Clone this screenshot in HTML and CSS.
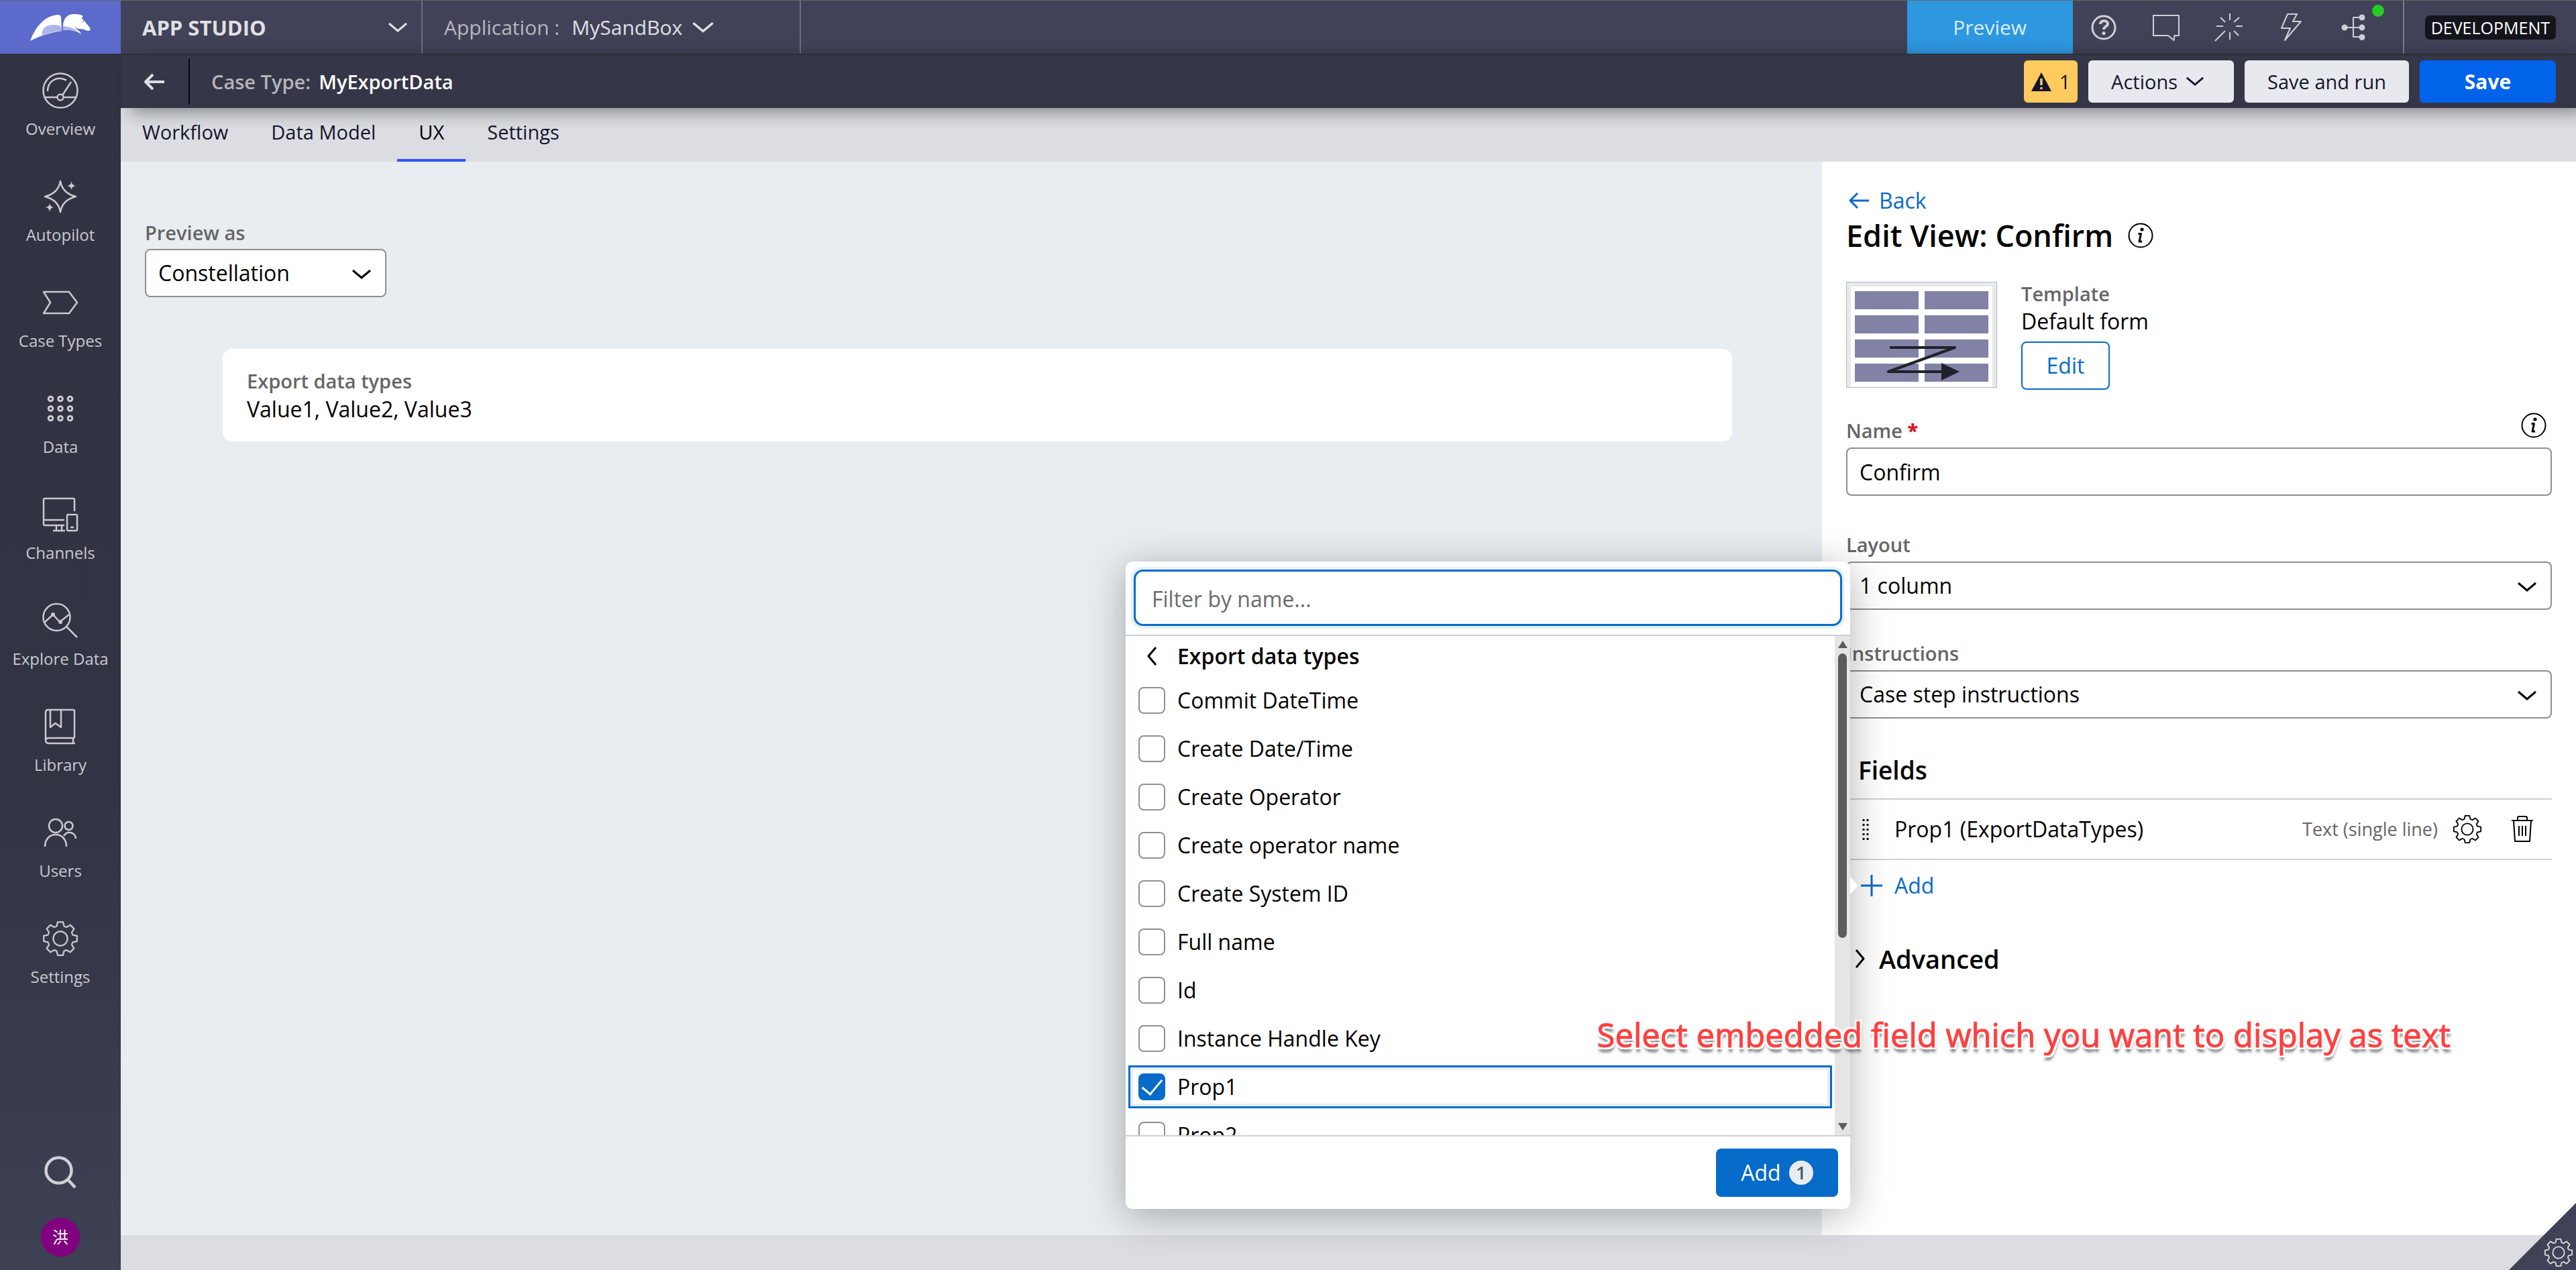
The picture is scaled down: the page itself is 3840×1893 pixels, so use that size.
FILE: index.html
```html
<!DOCTYPE html>
<html lang="en">
<head>
<meta charset="utf-8">
<title>App Studio - MyExportData</title>
<link rel="stylesheet" href="styles.css">
</head>
<body>
<svg class="sprite" aria-hidden="true">
  <symbol id="gear" viewBox="-12 -12 24 24"><path d="M-1.8-11H1.8L2.4-8.3Q3.3-7.6 4.17-7.57L6.51-9.05 9.05-6.51 7.57-4.17Q7.6-3.3 8.3-2.4L11-1.8V1.8L8.3 2.4Q7.6 3.3 7.57 4.17L9.05 6.51 6.51 9.05 4.17 7.57Q3.3 7.6 2.4 8.3L1.8 11H-1.8L-2.4 8.3Q-3.3 7.6-4.17 7.57L-6.51 9.05-9.05 6.51-7.57 4.17Q-7.6 3.3-8.3 2.4L-11 1.8V-1.8L-8.3-2.4Q-7.6-3.3-7.57-4.17L-9.05-6.51-6.51-9.05-4.17-7.57Q-3.3-7.6-2.4-8.3Z"/><circle r="4.7"/></symbol>
  <symbol id="chevron" viewBox="0 0 30 16"><path d="M2 2L15 13L28 2"/></symbol>
  <symbol id="info" viewBox="0 0 38 38"><circle cx="19" cy="19" r="17.5"/><circle cx="21" cy="10" r="2.6" class="solid"/><path d="M15.500 16.500H19.500L17 28H21" class="bold"/></symbol>
  <symbol id="arrow-left" viewBox="0 0 32 26"><path d="M14 2L3 13L14 24M3 13H31"/></symbol>
</svg>

<div class="app">
  <header class="topbar">
    <a class="logo" href="#" aria-label="Home">
      <svg viewBox="45 24 90 40" width="90" height="40">
        <path fill="#fff" d="M45 64C52 45 66 25 88 25Q91 26 91 30L92 49C78 51 60 56 45 64Z"/>
        <path fill="#aeb4e6" d="M63 56C61 43 72 40 80 40C86 40 90 41 91 43L92.500 49C80 50 70 53 63 56Z"/>
        <path fill="#fff" d="M94 48C93 30 100 24 111 24C118 24 121 25 123.500 27L122 31C127 34 128 38 134 44Q136 49 131 49C128 49 127 46 118 46Q113 45 111 42C113 47 120 49 121 54C115 49 105 47 94 48Z"/>
        <path fill="#aeb4e6" d="M94 48V42C102 42.500 111 45 117 50C110 48 102 47.500 94 48Z"/>
        <circle cx="124" cy="35" r="1" fill="#5c6acb"/>
      </svg>
    </a>
    <button class="studio">APP STUDIO<svg class="chev" width="30" height="16"><use href="#chevron"/></svg></button>
    <button class="application"><span>Application :</span>MySandBox<svg class="chev" width="34" height="18"><use href="#chevron"/></svg></button>
    <button class="preview">Preview</button>
    <div class="tools">
      <button aria-label="Help"><svg viewBox="0 0 44 44" class="ic"><circle cx="22" cy="22" r="17" stroke-width="3"/><path stroke-width="4" d="M17 17C17 10 28 11 28 16.500C28 20.500 22 20.500 22 25"/><circle class="solid" cx="22" cy="30.500" r="2.600"/></svg></button>
      <button aria-label="Messages"><svg viewBox="0 0 44 44" class="ic"><path d="M3 4H41V34H34.500L33.500 41L25 34H3Z"/></svg></button>
      <button aria-label="Highlights"><svg viewBox="0 0 44 44" class="ic"><path d="M24 1V11M24 29V40M4 20H14M33 20H43M10 7L17 14M38 7L30 14M30 27L37 34M17 27L2 42"/></svg></button>
      <button aria-label="Quick actions"><svg viewBox="0 0 44 44" class="ic"><path d="M17 2H31L25 13H37L13 41L21 23H8Z"/></svg></button>
      <button aria-label="Agile workbench" class="tree"><svg viewBox="0 0 44 44" class="ic"><path d="M9 22H35M35 7H22V36H35"/><g class="solid"><circle cx="9" cy="22" r="4.500"/><circle cx="35" cy="7" r="4.500"/><circle cx="35" cy="22" r="4.500"/><circle cx="35" cy="36.500" r="4.500"/></g></svg><i class="dot"></i></button>
    </div>
    <div class="env"><span>DEVELOPMENT</span></div>
  </header>

  <nav class="sidebar" aria-label="Studio">
    <a href="#"><svg viewBox="0 0 54 54"><circle cx="27" cy="27" r="25.500"/><path d="M8 28C8 14 20 4 36 11.500M43 14L30 34M3.500 37H22M32 37H50.500"/><circle cx="27" cy="37" r="4.500"/></svg>Overview</a>
    <a href="#"><svg viewBox="0 0 54 54"><path d="M27 4Q30 22 50 27Q30 32 27 50Q24 32 4 27Q24 22 27 4Z"/><path class="solid" d="M43.500 4Q44 10 50 11Q44 12 43.500 17Q43 12 37 11Q43 10 43.500 4ZM11 37Q11.500 42 17 43Q11.500 44 11 50Q10.500 44 5 43Q10.500 42 11 37Z"/></svg>Autopilot</a>
    <a href="#"><svg viewBox="0 0 54 54"><path d="M2 11H40L52 27L40 43H2L12 27Z"/></svg>Case Types</a>
    <a href="#"><svg viewBox="0 0 54 54"><g stroke-width="3"><circle cx="12.500" cy="12.500" r="3.300"/><circle cx="27" cy="12.500" r="3.300"/><circle cx="41.500" cy="12.500" r="3.300"/><circle cx="12.500" cy="27" r="3.300"/><circle cx="27" cy="27" r="3.300"/><circle cx="41.500" cy="27" r="3.300"/><circle cx="12.500" cy="41.500" r="3.300"/><circle cx="27" cy="41.500" r="3.300"/><circle cx="41.500" cy="41.500" r="3.300"/></g></svg>Data</a>
    <a href="#"><svg viewBox="0 0 54 54"><path d="M48 22V5Q48 3 46 3H4Q2 3 2 5V41Q2 43 4 43H33M2 35H33M16 51H34M21 43V51M29 43V51"/><rect x="37" y="27" width="15" height="24" rx="2"/><path d="M42 46H47"/></svg>Channels</a>
    <a href="#"><svg viewBox="0 0 54 54"><circle cx="21.500" cy="22" r="20"/><path d="M36 36L52 52M3 30L16 18L26 29L40 18"/><g class="solid"><circle cx="16" cy="18" r="3"/><circle cx="27" cy="29" r="3"/></g></svg>Explore Data</a>
    <a href="#"><svg viewBox="0 0 54 54"><path d="M48 44V4Q48 2 46 2H9Q5 2 5 6V47Q5 52 10 52H49M48 44H10Q5 44 5 48M46 44V52M12 2V28L19.500 22L28 28V2"/></svg>Library</a>
    <a href="#"><svg viewBox="0 0 54 54"><circle cx="20" cy="17" r="10"/><path d="M4 48C4 24 36 24 36 48M32 32C38 22 50 28 50 36"/><circle cx="39.500" cy="17" r="6"/></svg>Users</a>
    <a href="#"><svg class="gear"><use href="#gear"/></svg>Settings</a>
    <div class="foot">
      <button aria-label="Search"><svg viewBox="0 0 54 54"><circle cx="24.500" cy="23.500" r="19" stroke-width="4.500"/><path stroke-width="4.500" d="M38 37L49 49"/></svg></button>
      <button class="avatar">洪</button>
    </div>
  </nav>

  <main class="work">
    <div class="casebar">
      <button class="back" aria-label="Back"><svg width="32" height="26"><use href="#arrow-left"/></svg></button>
      <h1><span>Case Type:</span>MyExportData</h1>
      <div class="actions">
        <button class="warn"><svg viewBox="0 0 30 28" width="30" height="28"><path d="M15 0L30 28H0Z" fill="#14152c"/><path d="M15 9V19M15 22V25" stroke="#ffcb5e" stroke-width="3.500" fill="none"/></svg>1</button>
        <button class="more">Actions<svg class="chev" width="28" height="15"><use href="#chevron"/></svg></button>
        <button>Save and run</button>
        <button class="save">Save</button>
      </div>
    </div>
    <nav class="tabs" aria-label="Case type">
      <a href="#">Workflow</a><a href="#">Data Model</a><a href="#" class="on" aria-current="page">UX</a><a href="#">Settings</a>
    </nav>

    <div class="body">
      <section class="canvas">
        <div class="previewas">
          <label for="mode">Preview as</label>
          <div class="select"><select id="mode"><option>Constellation</option></select><svg class="chev" width="30" height="16"><use href="#chevron"/></svg></div>
        </div>
        <div class="card">
          <div class="lbl">Export data types</div>
          <div>Value1, Value2, Value3</div>
        </div>
      </section>

      <aside class="panel">
        <a class="backlink" href="#"><svg width="32" height="26"><use href="#arrow-left"/></svg>Back</a>
        <h2>Edit View: Confirm<svg class="info" width="38" height="38"><use href="#info"/></svg></h2>
        <div class="template">
          <svg class="thumb" viewBox="0 0 225 158" width="225" height="158">
            <rect width="225" height="158" fill="#b4b5cb"/>
            <rect x="1" y="1" width="223" height="156" fill="#e8e9eb"/>
            <rect x="7" y="7" width="211" height="150" fill="#fff"/>
            <g fill="#8182a5"><rect x="13" y="14" width="95" height="27"/><rect x="117" y="14" width="95" height="27"/><rect x="13" y="50" width="95" height="27"/><rect x="117" y="50" width="95" height="27"/><rect x="13" y="86" width="95" height="27"/><rect x="117" y="86" width="95" height="27"/><rect x="13" y="122" width="95" height="27"/><rect x="117" y="122" width="95" height="27"/></g>
            <path d="M65 98H162L63 134H145" fill="none" stroke="#20212a" stroke-width="4"/><path d="M142 121L169 134L142 147Z" fill="#20212a"/>
          </svg>
          <div>
            <div class="lbl">Template</div>
            <div class="value">Default form</div>
            <button class="edit">Edit</button>
          </div>
        </div>
        <div class="field wide">
          <div class="head"><label for="vname">Name <b>*</b></label><svg class="info" width="38" height="38"><use href="#info"/></svg></div>
          <input id="vname" type="text" value="Confirm">
        </div>
        <div class="field">
          <div class="head"><label for="layout">Layout</label></div>
          <div class="select"><select id="layout"><option>1 column</option></select><svg class="chev" width="30" height="16"><use href="#chevron"/></svg></div>
        </div>
        <div class="field">
          <div class="head"><label for="instr">Instructions</label></div>
          <div class="select"><select id="instr"><option>Case step instructions</option></select><svg class="chev" width="30" height="16"><use href="#chevron"/></svg></div>
        </div>
        <h3>Fields</h3>
        <div class="prop">
          <svg class="grip" viewBox="0 0 10 32" width="10" height="32"><path d="M2 1V32M8 1V32"/></svg>
          <span class="pname">Prop1 (ExportDataTypes)</span>
          <span class="ptype">Text (single line)</span>
          <button aria-label="Configure"><svg width="44" height="44"><use href="#gear"/></svg></button>
          <button aria-label="Delete"><svg viewBox="0 0 44 44" width="44" height="44"><path d="M6 9H38M15 9V5Q15 3 17 3H27Q29 3 29 5V9M9 9L11 40H33L35 9M17 17V32M22 17V32M27 17V32"/></svg></button>
        </div>
        <button class="addfield"><svg viewBox="0 0 32 32" width="32" height="32"><path d="M16 0V32M0 16H32"/></svg>Add</button>
        <button class="advanced"><svg viewBox="0 0 16 30" width="16" height="30"><path d="M2 2L13 15L2 28"/></svg>Advanced</button>
      </aside>
    </div>
    <footer class="bottombar"></footer>

    <div class="picker" role="dialog" aria-label="Add fields">
      <div class="search"><input type="text" aria-label="Filter by name" placeholder="Filter by name..."></div>
      <div class="scroller">
        <div class="list">
          <button class="crumb"><svg viewBox="0 0 16 30" width="16" height="30"><path d="M14 2L3 15L14 28"/></svg>Export data types</button>
          <label><input type="checkbox">Commit DateTime</label>
          <label><input type="checkbox">Create Date/Time</label>
          <label><input type="checkbox">Create Operator</label>
          <label><input type="checkbox">Create operator name</label>
          <label><input type="checkbox">Create System ID</label>
          <label><input type="checkbox">Full name</label>
          <label><input type="checkbox">Id</label>
          <label><input type="checkbox">Instance Handle Key</label>
          <label class="active"><input type="checkbox" checked>Prop1</label>
          <label><input type="checkbox">Prop2</label>
        </div>
        <div class="track"><i class="up"></i><i class="thumbbar"></i><i class="down"></i></div>
      </div>
      <div class="commit"><button>Add<span>1</span></button></div>
      <i class="pointer"></i>
    </div>
    <p class="note">Select embedded field which you want to display as text</p>
    <button class="corner" aria-label="Developer tools"><svg width="44" height="44"><use href="#gear"/></svg></button>
  </main>
</div>
</body>
</html>
```
FILE: styles.css
```css
* { box-sizing: border-box; }
body {
  margin: 0;
  font: 32px/44px "Open Sans", "Noto Sans CJK SC", sans-serif;
  color: #000;
  background: #dcdde2;
}
button, input, select { font: inherit; color: inherit; margin: 0; }
button { border: 0; padding: 0; background: none; text-align: left; }
a { color: inherit; text-decoration: none; }
h1, h2, h3, p { margin: 0; }
i { display: block; }
svg { display: block; flex: none; fill: none; stroke: currentColor; stroke-width: 2; stroke-linejoin: round; }
.sprite { position: absolute; width: 0; height: 0; }
.solid { fill: currentColor; stroke: none; }
.bold { stroke-width: 3; }
.chev { stroke-width: 3; stroke-linejoin: miter; }

.app {
  display: grid;
  grid-template: 80px 1fr / 180px 1fr;
  min-height: 100vh;
}

/* top bar */
.topbar {
  grid-column: 1 / -1;
  display: flex;
  background: #414257;
  border-top: 1px solid #666766;
  color: #e0e0e4;
}
.logo { width: 180px; background: #5c6acb; display: grid; place-items: center; }
.logo svg { stroke: none; }
.studio {
  width: 450px;
  display: flex;
  align-items: center;
  justify-content: space-between;
  padding: 0 20px 0 32px;
  font-size: 31px;
  font-weight: 700;
  border-right: 2px solid #6d6e80;
}
.application {
  width: 564px;
  display: flex;
  align-items: center;
  gap: 14px;
  padding-left: 32px;
  font-size: 30px;
  border-right: 2px solid #6d6e80;
}
.application span { color: #b7b8c0; margin-right: 4px; }
.preview {
  width: 247px;
  margin-left: auto;
  background: #2d97df;
  text-align: center;
  font-size: 30px;
  color: #dceefb;
}
.tools {
  display: flex;
  align-items: center;
  gap: 49px;
  padding: 0 52px 0 24px;
  border-right: 2px solid #7b7c8c;
  color: #cfcfd6;
}
.ic { width: 44px; height: 44px; }
.tree { position: relative; }
.dot { position: absolute; right: -24px; top: -12px; width: 18px; height: 18px; border-radius: 50%; background: #27cb25; }
.env { display: flex; align-items: center; padding: 0 30px 0 31px; }
.env span {
  background: #14151b;
  color: #fff;
  font-size: 25px;
  line-height: 36px;
  padding: 0 9px;
  border-radius: 7px;
}

/* sidebar */
.sidebar {
  display: flex;
  flex-direction: column;
  padding: 28px 0 20px;
  background: linear-gradient(#313242, #323343 60%, #3e4054);
  color: #d0d0d5;
  font-size: 24px;
  line-height: 34px;
}
.sidebar a { display: flex; flex-direction: column; align-items: center; gap: 13px; height: 158px; color: #c9c9cf; }
.sidebar svg { width: 54px; height: 54px; stroke-width: 2.5; }
.sidebar svg.gear { stroke-width: 1; }
.foot { margin-top: auto; display: flex; flex-direction: column; align-items: center; gap: 40px; }
.avatar {
  width: 58px;
  height: 58px;
  border-radius: 50%;
  background: #800080;
  color: #fff;
  text-align: center;
}

/* case header */
.work { position: relative; display: flex; flex-direction: column; min-width: 0; }
.casebar {
  position: relative;
  display: flex;
  align-items: center;
  height: 81px;
  padding-right: 30px;
  border-top: 2px solid #2b3039;
  background: #353647;
  box-shadow: 14px 6px 24px rgba(0, 0, 0, .4);
  color: #fff;
}
.back { height: 68px; width: 103px; padding-left: 34px; border-right: 2px solid #050508; color: #dedee2; display: flex; align-items: center; }
.back svg { stroke-width: 4; }
h1 { padding-left: 32px; font-size: 29px; font-weight: 600; display: flex; gap: 12px; }
h1 span { color: #b5b5bb; }
.actions { margin-left: auto; display: flex; gap: 16px; }
.actions button {
  display: flex;
  align-items: center;
  justify-content: center;
  gap: 12px;
  height: 63px;
  padding: 0 34px;
  border-radius: 6px;
  background: #e8e9ee;
  color: #14152c;
  font-size: 29px;
}
.actions .more { width: 217px; justify-content: flex-start; }
.actions .warn { background: #ffcb5e; padding: 0 12px; width: 80px; }
.actions .warn svg { stroke: none; }
.actions .save { width: 203px; background: #0063ea; color: #fff; font-size: 30px; font-weight: 700; }
.tabs { display: flex; height: 80px; font-size: 29px; color: #14152c; }
.tabs a { padding: 14px 32px 0; border-bottom: 4px solid transparent; }
.tabs .on { border-color: #2952ff; color: #000; }

/* body */
.body { flex: 1; display: grid; grid-template-columns: 1fr 1124px; }
.canvas { background: #e8edf1; }
.lbl, label { color: #666; font-size: 29px; font-weight: 600; line-height: 36px; }
.previewas { width: 396px; padding: 88px 0 0 36px; }
.previewas label { display: block; margin-bottom: 6px; }
.select { position: relative; }
.select .chev { position: absolute; right: 22px; top: 30px; }
select, .field input {
  display: block;
  width: 100%;
  height: 72px;
  padding: 0 18px;
  border: 2px solid #8f8f8f;
  border-radius: 8px;
  background: #fff;
  appearance: none;
}
.card { margin: 77px 134px 0 152px; padding: 30px 36px 24px; background: #fff; border-radius: 14px; line-height: 48px; }

/* view editor */
.panel { background: #fff; padding: 36px 36px 0; }
.backlink { display: flex; align-items: center; gap: 14px; padding-left: 3px; color: #076bc9; }
.backlink svg { stroke-width: 3; }
h2 { display: flex; align-items: center; gap: 22px; font-size: 45px; font-weight: 600; line-height: 60px; }
.template { display: flex; gap: 36px; margin-top: 39px; }
.thumb { stroke: none; }
.value { line-height: 46px; }
.edit {
  margin-top: 7px;
  width: 132px;
  height: 72px;
  border: 2px solid #076bc9;
  border-radius: 8px;
  color: #076bc9;
  text-align: center;
}
.field { margin-top: 45px; }
.field.wide { margin: 41px 0 53px; }
.head { display: flex; justify-content: space-between; height: 40px; margin-bottom: 5px; padding-right: 8px; }
.head label { line-height: 40px; }
.head b { color: #d91c29; }
.head svg { margin-top: -7px; }
h3 { margin-top: 45px; padding: 0 18px; font-size: 37px; font-weight: 600; line-height: 64px; height: 74px; }
.prop {
  display: flex;
  align-items: center;
  height: 92px;
  padding: 0 22px 0 24px;
  border: solid #cfcfcf;
  border-width: 2px 0;
}
.grip { stroke-width: 3; stroke-dasharray: 3 4; stroke-linejoin: miter; }
.pname { margin-left: 38px; flex: 1; }
.ptype { color: #666; font-size: 27px; margin-right: 22px; }
.prop button + button { margin-left: 38px; }
.prop use { stroke-width: 1; }
.addfield { display: flex; align-items: center; gap: 18px; height: 76px; padding-left: 22px; color: #076bc9; }
.addfield svg { stroke-width: 3; }
.advanced { display: flex; align-items: center; gap: 20px; margin-top: 37px; padding-left: 13px; height: 68px; font-size: 38px; font-weight: 600; }
.advanced svg, .crumb svg { stroke-width: 3; }
.bottombar { height: 52px; }

/* field picker */
.picker {
  position: absolute;
  right: 1082px;
  top: 757px;
  width: 1080px;
  background: #fff;
  border-radius: 10px;
  box-shadow: 0 10px 60px rgba(0, 0, 0, .3);
}
.search { padding: 12px; border-bottom: 2px solid #cfcfcf; height: 111px; }
.search input {
  display: block;
  width: 100%;
  height: 84px;
  padding: 2px 24px 0;
  border: 3px solid #076bc9;
  border-radius: 14px;
  background: #fff;
  box-shadow: 0 0 0 4px #e6f0f9;
}
.search input::placeholder { color: #6b6b6b; opacity: 1; }
.scroller { display: flex; height: 744px; overflow: hidden; }
.list { flex: 1; padding: 0 4px; }
.crumb { display: flex; align-items: center; gap: 30px; height: 60px; margin-bottom: 4px; padding-left: 27px; font-weight: 600; }
.list label {
  display: flex;
  align-items: center;
  gap: 18px;
  height: 64px;
  margin-bottom: 8px;
  padding-left: 15px;
  color: #000;
  font-size: 32px;
  font-weight: 400;
}
.list .active { padding-left: 12px; border: 3px solid #076bc9; box-shadow: inset 0 0 0 4px #e6f0f9; }
.list input {
  appearance: none;
  width: 40px;
  height: 40px;
  border: 2px solid #909090;
  border-radius: 8px;
  background: #fff;
}
.list input:checked {
  border-color: #076bc9;
  background: #076bc9;
  display: grid;
  justify-content: center;
}
.list input:checked::after {
  content: "";
  width: 14px;
  height: 26px;
  border: solid #fff;
  border-width: 0 3px 3px 0;
  transform: rotate(40deg);
}
.track { width: 23px; background: #e5e5e5; display: flex; flex-direction: column; align-items: center; padding: 7px 0; }
.up, .down { width: 0; height: 0; border: solid transparent; border-width: 0 7px; }
.up { border-bottom: 11px solid #5c5c5c; }
.down { border-top: 11px solid #5c5c5c; margin-top: auto; }
.thumbbar { width: 13px; height: 424px; margin-top: 8px; border-radius: 7px; background: #5c5c5c; }
.commit { display: flex; justify-content: flex-end; padding: 18px; border-top: 2px solid #cfcfcf; }
.commit button {
  display: flex;
  align-items: center;
  justify-content: center;
  gap: 12px;
  width: 182px;
  height: 72px;
  border-radius: 8px;
  background: #076bc9;
  color: #fff;
}
.commit span {
  width: 36px;
  height: 36px;
  border-radius: 50%;
  background: #e8ecf1;
  color: #4a5663;
  font-size: 27px;
  font-weight: 600;
  line-height: 36px;
  text-align: center;
}
.pointer {
  position: absolute;
  left: 100%;
  top: 470px;
  border: solid transparent;
  border-width: 13px 0 13px 12px;
  border-left-color: #fff;
}
.note {
  position: absolute;
  right: 187px;
  top: 1429px;
  font-size: 49px;
  line-height: 66px;
  white-space: nowrap;
  color: #ff4040;
  -webkit-text-stroke: 1px #ff4040;
  text-shadow: 3px 0 #fff, -3px 0 #fff, 0 3px #fff, 0 -3px #fff, 3px 3px #fff, -3px 3px #fff, 3px -3px #fff, -3px -3px #fff, 1px 7px 4px #555;
}
.corner {
  position: absolute;
  right: 0;
  bottom: 0;
  width: 100px;
  height: 100px;
  display: flex;
  align-items: flex-end;
  justify-content: flex-end;
  padding: 4px;
  background: #414257;
  clip-path: polygon(100% 0, 100% 100%, 0 100%);
  color: #dcdce0;
}
.corner svg { stroke-width: 1; }
```
